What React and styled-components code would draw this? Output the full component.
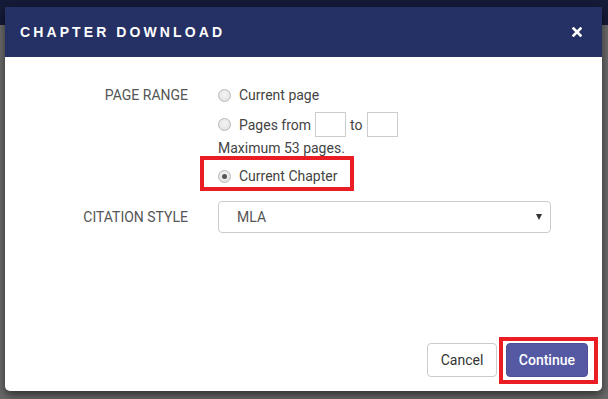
import React from 'react'
import styled, { createGlobalStyle } from 'styled-components'

const GlobalStyle = createGlobalStyle`
  html, body {
    margin: 0;
    padding: 0;
  }
  body {
    width: 608px;
    height: 399px;
    overflow: hidden;
    font-family: Roboto, "Liberation Sans", Arial, sans-serif;
    background: linear-gradient(to bottom, #151a38 0, #151a38 25px, #6a6a6a 25px, #6a6a6a 100%);
  }
`

const Backdrop = styled.div`
  width: 608px;
  height: 399px;
  padding: 7px 6px 0 5px;
  box-sizing: border-box;
`

const Modal = styled.div`
  width: 597px;
  height: 384px;
  background: #fff;
  border-radius: 0 0 5px 5px;
  box-shadow: 0 4px 10px rgba(0, 0, 0, 0.55);
  display: flex;
  flex-direction: column;
`

const Header = styled.div`
  height: 50px;
  flex: none;
  background: #253064;
  display: flex;
  align-items: center;
  justify-content: space-between;
  padding: 0 20px 0 15px;
`

const Title = styled.h2`
  margin: 0;
  color: #fff;
  font-family: "Liberation Sans", Arial, sans-serif;
  font-size: 14px;
  font-weight: 700;
  letter-spacing: 3.1px;
`

const CloseButton = styled.button`
  padding: 0;
  background: none;
  border: none;
  display: flex;
  cursor: pointer;
`

const Body = styled.div`
  flex: 1;
  padding: 28px 51px 0 0;
  display: grid;
  grid-template-columns: 183px 1fr;
  column-gap: 30px;
  row-gap: 15px;
  align-content: start;
`

const Label = styled.div`
  text-align: right;
  font-size: 14px;
  color: #555;
  line-height: ${(p) => p.$lh || 20}px;
  text-transform: uppercase;
`

const Options = styled.div`
  display: flex;
  flex-direction: column;
  align-items: flex-start;
`

const Option = styled.label`
  position: relative;
  display: inline-flex;
  align-items: center;
  gap: 8px;
  height: ${(p) => p.$h || 20}px;
  margin-top: ${(p) => p.$mt || 0}px;
  font-size: 14px;
  color: #444;
`

const Range = styled.span`
  display: inline-flex;
  align-items: center;
  gap: 4px;
`

const Radio = styled.span`
  width: 11px;
  height: 11px;
  border-radius: 50%;
  border: 1px solid #b8b8b8;
  background: radial-gradient(circle at 50% 40%, #f4f4f4 0, #dedede 100%);
  display: flex;
  align-items: center;
  justify-content: center;

  &::after {
    content: '';
    width: 5px;
    height: 5px;
    border-radius: 50%;
    background: ${(p) => (p.$checked ? '#555' : 'transparent')};
  }
`

const SmallInput = styled.input`
  width: 31px;
  height: 25px;
  box-sizing: border-box;
  border: 1px solid #ccc;
  margin: 0;
  padding: 0 4px;
  font-family: inherit;
`

const Hint = styled.div`
  font-size: 14px;
  color: #444;
  line-height: 16px;
  margin-top: 3px;
`

const Highlight = styled.span`
  position: absolute;
  top: ${(p) => p.$t}px;
  bottom: ${(p) => p.$b}px;
  left: ${(p) => p.$l}px;
  right: ${(p) => p.$r}px;
  border: 4px solid #ea1c24;
  pointer-events: none;
`

const SelectBox = styled.div`
  position: relative;
  height: 32px;
  box-sizing: border-box;
  border: 1px solid #ccc;
  border-radius: 4px;
  display: flex;
  align-items: center;
  padding: 0 18px;
  font-size: 14px;
  color: #555;
`

const Caret = styled.span`
  margin-left: auto;
  margin-right: -10px;
  width: 0;
  height: 0;
  border-left: 3.5px solid transparent;
  border-right: 3.5px solid transparent;
  border-top: 6px solid #333;
`

const Footer = styled.div`
  display: flex;
  justify-content: flex-end;
  gap: 9px;
  padding: 0 14px 14px 0;
`

const Button = styled.button`
  position: relative;
  height: 34px;
  padding: 0 ${(p) => (p.$primary ? 12 : 12.5)}px;
  font-family: inherit;
  font-size: 14px;
  border-radius: 4px;
  border: 1px solid ${(p) => (p.$primary ? '#4d4f99' : '#ccc')};
  background: ${(p) => (p.$primary ? '#5558a2' : '#fff')};
  color: ${(p) => (p.$primary ? '#fff' : '#333')};
  font-weight: ${(p) => (p.$primary ? 500 : 400)};
`

const App = () => {
  return (
    <>
      <GlobalStyle />
      <Backdrop>
        <Modal>
          <Header>
            <Title>CHAPTER DOWNLOAD</Title>
            <CloseButton aria-label="Close">
              <svg width="10" height="10" viewBox="0 0 10 10">
                <path d="M1.5 1.5 L8.5 8.5 M8.5 1.5 L1.5 8.5" stroke="#fff" strokeWidth="2.6" strokeLinecap="square" />
              </svg>
            </CloseButton>
          </Header>
          <Body>
            <Label>Page Range</Label>
            <Options>
              <Option>
                <Radio />
                Current page
              </Option>
              <Option $h={25} $mt={7}>
                <Radio />
                <Range>
                  <span>Pages from</span>
                  <SmallInput />
                  <span>to</span>
                  <SmallInput />
                </Range>
              </Option>
              <Hint>Maximum 53 pages.</Hint>
              <Option $mt={10}>
                <Radio $checked />
                Current Chapter
                <Highlight $t={-10} $b={-5} $l={-18} $r={-17} />
              </Option>
            </Options>
            <Label $lh={32}>Citation Style</Label>
            <SelectBox>
              MLA
              <Caret />
            </SelectBox>
          </Body>
          <Footer>
            <Button>Cancel</Button>
            <Button $primary>
              Continue
              <Highlight $t={-7} $b={-8} $l={-8} $r={-11} />
            </Button>
          </Footer>
        </Modal>
      </Backdrop>
    </>
  )
}

export default App
